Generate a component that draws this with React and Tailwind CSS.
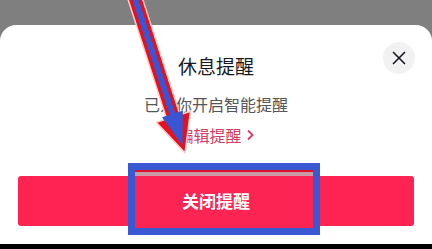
import { X } from 'lucide-react'

const cjk = { fontFamily: '"Noto Sans CJK SC", "Noto Sans", sans-serif' }

function Arrow() {
  return (
    <svg className="absolute left-0 top-0 z-[3] pointer-events-none" width="432" height="249" viewBox="0 0 432 249">
      <g transform="translate(185 153) rotate(-17.9)">
        <polygon
          points="-7,-220 7,-220 7,-38 18,-38 0,0 -18,-38 -7,-38"
          fill="#e8101c"
          stroke="#f4d2cc"
          strokeWidth="1.5"
          strokeLinejoin="round"
        />
        <polygon
          points="-3,-220 3,-220 3,-41 11,-41 0,-8 -11,-41 -3,-41"
          fill="#3a55d4"
        />
      </g>
    </svg>
  )
}

export default function App() {
  return (
    <div className="relative w-[432px] h-[249px] overflow-hidden flex flex-col bg-[#7f7f7f]" style={cjk}>
      <div className="h-[25px] shrink-0" />

      {/* bottom sheet */}
      <div className="relative flex-1 flex flex-col items-center bg-white rounded-t-[16px]">
        <button className="absolute right-[17px] top-[17px] w-8 h-8 rounded-full bg-[#f2f2f2] flex items-center justify-center text-[#161823]">
          <X size={22} strokeWidth={1.8} />
        </button>

        <div className="pt-[28px] text-[19px] leading-[26px] text-[#161823]">休息提醒</div>
        <div className="mt-[14px] text-[16px] leading-[22px] text-[#555]">已为你开启智能提醒</div>
        <div className="mt-[9px] flex items-center gap-[4px] text-[16px] leading-[22px] text-[#d43d62]">
          <span>编辑提醒</span>
          <svg width="9" height="12" viewBox="0 0 9 12" fill="none" stroke="currentColor" strokeWidth="1.8">
            <path d="M2 1.5 L6.5 6 L2 10.5" />
          </svg>
        </div>

        <div className="w-full px-[18px] mt-[30px]">
          <button className="w-full h-[50px] rounded-[3px] bg-[#fe2350] text-white text-[17px] font-bold flex items-center justify-center">
            <span className="relative z-[2]">关闭提醒</span>
          </button>
        </div>
      </div>

      <div className="h-[5px] shrink-0 bg-black" />

      {/* annotation: highlight box */}
      <div className="absolute z-[1] left-[128px] top-[163px] w-[192px] h-[72px] border-[7px] border-[#3a58d2] flex flex-col">
        <div className="h-[2px] bg-[#e0102a]" />
        <div className="h-[4px] bg-[#c99aa3]" />
        <div className="flex-1 bg-[#fb2452]" />
      </div>
      <Arrow />
    </div>
  )
}
